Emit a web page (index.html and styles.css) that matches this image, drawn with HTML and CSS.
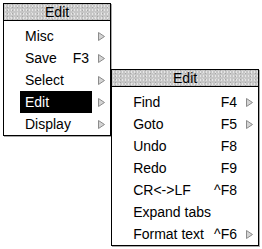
FILE: index.html
```html
<!DOCTYPE html>
<html lang="en">
<head>
    <meta charset="UTF-8">
    <title>Edit menu</title>
    <link rel="stylesheet" href="styles.css">
</head>
<body>
    <div class="desktop">
        <div class="menu menu-main">
            <div class="title">Edit</div>
            <div class="items">
                <div class="item"><div class="entry"><span class="label">Misc</span></div><svg class="arrow" viewBox="0 0 7 9"><polygon points="0.5,0.5 6.5,4.5 0.5,8.5"/></svg></div>
                <div class="item"><div class="entry"><span class="label">Save</span><span class="key">F3</span></div><svg class="arrow" viewBox="0 0 7 9"><polygon points="0.5,0.5 6.5,4.5 0.5,8.5"/></svg></div>
                <div class="item"><div class="entry"><span class="label">Select</span></div><svg class="arrow" viewBox="0 0 7 9"><polygon points="0.5,0.5 6.5,4.5 0.5,8.5"/></svg></div>
                <div class="item selected"><div class="entry"><span class="label">Edit</span></div><svg class="arrow" viewBox="0 0 7 9"><polygon points="0.5,0.5 6.5,4.5 0.5,8.5"/></svg></div>
                <div class="item"><div class="entry"><span class="label">Display</span></div><svg class="arrow" viewBox="0 0 7 9"><polygon points="0.5,0.5 6.5,4.5 0.5,8.5"/></svg></div>
            </div>
        </div>

        <div class="menu menu-sub">
            <div class="title">Edit</div>
            <div class="items">
                <div class="item"><div class="entry"><span class="label">Find</span><span class="key">F4</span></div><svg class="arrow" viewBox="0 0 7 9"><polygon points="0.5,0.5 6.5,4.5 0.5,8.5"/></svg></div>
                <div class="item"><div class="entry"><span class="label">Goto</span><span class="key">F5</span></div><svg class="arrow" viewBox="0 0 7 9"><polygon points="0.5,0.5 6.5,4.5 0.5,8.5"/></svg></div>
                <div class="item"><div class="entry"><span class="label">Undo</span><span class="key">F8</span></div><span class="no-arrow"></span></div>
                <div class="item"><div class="entry"><span class="label">Redo</span><span class="key">F9</span></div><span class="no-arrow"></span></div>
                <div class="item"><div class="entry"><span class="label">CR&lt;-&gt;LF</span><span class="key">^F8</span></div><span class="no-arrow"></span></div>
                <div class="item"><div class="entry"><span class="label">Expand tabs</span></div><span class="no-arrow"></span></div>
                <div class="item"><div class="entry"><span class="label">Format text</span><span class="key">^F6</span></div><svg class="arrow" viewBox="0 0 7 9"><polygon points="0.5,0.5 6.5,4.5 0.5,8.5"/></svg></div>
            </div>
        </div>
    </div>
</body>
</html>
```

FILE: styles.css
```css
body {
    margin: 0;
    background: #fff;
    font-family: "Liberation Sans", Arial, sans-serif;
    font-size: 14px;
    color: #000;
}

.desktop {
    display: flex;
    align-items: flex-start;
    padding: 3px;
}

.menu {
    border: 1px solid #000;
    background: #fff;
    box-shadow: 1px 1px 0 #a8a8a8;
}

.menu-main {
    width: 107px;
}

.menu-sub {
    width: 147px;
    margin-top: 66px;
}

/* stone-ish speckle for the title bar */
.title {
    height: 16px;
    line-height: 16px;
    text-align: center;
    border-bottom: 1px solid #000;
    background-color: #c6c6c6;
    background-image:
        radial-gradient(circle, #e6e6e6 0.7px, transparent 0.9px),
        radial-gradient(circle, #a6a6a6 0.6px, transparent 0.8px),
        radial-gradient(circle, #dadada 0.7px, transparent 0.9px);
    background-size: 3px 4px, 5px 3px, 7px 5px;
    background-position: 0 0, 1px 2px, 3px 1px;
}

.items {
    padding-top: 4px;
}

.item {
    display: flex;
    align-items: center;
    height: 22px;
    padding-left: 16px;
    padding-right: 5px;
}

.entry {
    flex: 1;
    display: flex;
    align-items: center;
    height: 22px;
    padding: 0 3px 0 5px;
}

.label {
    flex: 1;
    white-space: nowrap;
}

.key {
    white-space: nowrap;
}

.selected .entry {
    background: #000;
    color: #fff;
}

.arrow, .no-arrow {
    width: 7px;
    height: 9px;
    margin-left: 6px;
}

.arrow polygon {
    fill: #d4d4d4;
    stroke: #8c8c8c;
    stroke-width: 1;
}
```
